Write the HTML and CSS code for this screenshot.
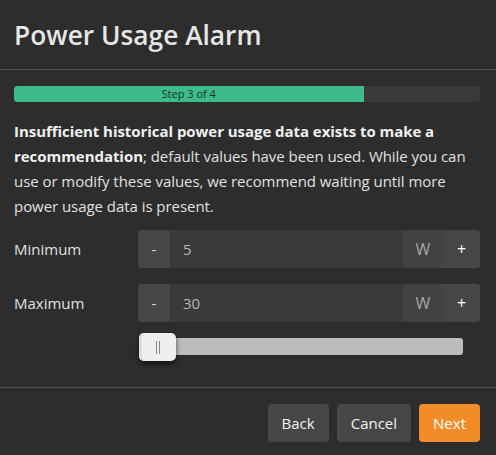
FILE: index.html
```html
<!DOCTYPE html>
<html lang="en">
<head>
<meta charset="utf-8">
<title>Power Usage Alarm</title>
<link rel="stylesheet" href="styles.css">
</head>
<body>
<div class="dialog">
  <header class="dialog-header">
    <h1 class="title">Power Usage Alarm</h1>
  </header>
  <main class="dialog-body">
    <div class="progress">
      <div class="progress-fill" style="width: 75%">Step 3 of 4</div>
    </div>
    <p class="notice"><strong>Insufficient historical power usage data exists to make a recommendation</strong>; default values have been used. While you can use or modify these values, we recommend waiting until more power usage data is present.</p>
    <div class="field">
      <label class="field-label">Minimum</label>
      <div class="input-group">
        <button class="step-btn">-</button>
        <input class="value" type="text" value="5">
        <span class="unit">W</span>
        <button class="step-btn plus">+</button>
      </div>
    </div>
    <div class="field">
      <label class="field-label">Maximum</label>
      <div class="input-group">
        <button class="step-btn">-</button>
        <input class="value" type="text" value="30">
        <span class="unit">W</span>
        <button class="step-btn plus">+</button>
      </div>
    </div>
    <div class="slider-row">
      <div class="slider">
        <div class="slider-track"></div>
        <div class="slider-handle"><span class="grip"></span></div>
      </div>
    </div>
  </main>
  <footer class="dialog-footer">
    <button class="btn btn-dark">Back</button>
    <button class="btn btn-dark">Cancel</button>
    <button class="btn btn-primary">Next</button>
  </footer>
</div>
</body>
</html>
```

FILE: styles.css
```css
* { box-sizing: border-box; }
html, body {
  margin: 0;
  background: #2d2d2d;
}
body {
  font-family: "Open Sans", "Noto Sans", sans-serif;
  color: #e0e0e0;
  width: 496px;
  height: 455px;
  overflow: hidden;
}
.dialog-header {
  height: 70px;
  border-bottom: 1px solid #505050;
  padding: 0 16px 0 14px;
  display: flex;
  align-items: center;
}
.title {
  margin: 0;
  font-size: 26.3px;
  font-weight: 600;
  color: #e6e6e6;
  letter-spacing: 0;
}
.dialog-body {
  padding: 16px 16px 0 14px;
  height: 318px;
  border-bottom: 1px solid #505050;
}
.progress {
  height: 16px;
  background: #3a3a3a;
  border-radius: 3px;
  overflow: hidden;
}
.progress-fill {
  height: 100%;
  background: #3dbb8b;
  color: #1c3328;
  font-size: 11px;
  line-height: 16px;
  text-align: center;
  border-radius: 3px 0 0 3px;
}
.notice {
  margin: 17px 0 11px;
  font-size: 15px;
  line-height: 25px;
  color: #e0e0e0;
  letter-spacing: -0.05px;
}
.notice strong {
  font-weight: 700;
  color: #f0f0f0;
}
.field {
  display: flex;
  align-items: center;
  margin-bottom: 16px;
}
.field-label {
  width: 124px;
  font-size: 15px;
  color: #e0e0e0;
}
.input-group {
  flex: 1;
  display: flex;
  height: 38px;
  border-radius: 4px;
  overflow: hidden;
  background: #444;
}
.step-btn {
  width: 32px;
  border: 0;
  background: #464646;
  color: #ddd;
  font-family: inherit;
  font-size: 15px;
  padding: 0;
}
.step-btn.plus {
  width: 37px;
  color: #fff;
  font-size: 16px;
}
.value {
  flex: 1;
  min-width: 0;
  border: 0;
  border-left: 1px solid #363636;
  background: #3a3a3a;
  color: #b8b8b8;
  font-family: inherit;
  font-size: 15px;
  padding: 0 12px;
}
.unit {
  width: 40px;
  display: flex;
  align-items: center;
  justify-content: center;
  color: #a8a8a8;
  font-size: 16px;
  background: #424242;
}
.slider-row {
  padding-left: 125px;
  padding-right: 17px;
}
.slider {
  position: relative;
  height: 28px;
  margin-top: -5px;
}
.slider-track {
  position: absolute;
  left: 1px;
  right: 0;
  top: 5px;
  height: 17px;
  background: #bcbcbc;
  border-radius: 3px;
}
.slider-handle {
  position: absolute;
  left: 0;
  top: 0;
  width: 37px;
  height: 28px;
  background: #efefef;
  border-radius: 5px;
  box-shadow: 0 3px 5px rgba(0,0,0,0.6), inset 3px 0 0 #dcdcdc;
  display: flex;
  align-items: center;
  justify-content: center;
}
.grip {
  width: 4px;
  height: 13px;
  border-left: 1px solid #888;
  border-right: 1px solid #888;
}
.dialog-footer {
  display: flex;
  justify-content: flex-end;
  gap: 8px;
  padding: 16px 16px 0 14px;
}
.btn {
  height: 38px;
  border: 0;
  border-radius: 4px;
  font-family: inherit;
  font-size: 15px;
  padding: 0 14px;
  color: #f2f2f2;
}
.btn-dark { background: #464646; }
.btn-primary { background: #f28c28; color: #fff; }
```
